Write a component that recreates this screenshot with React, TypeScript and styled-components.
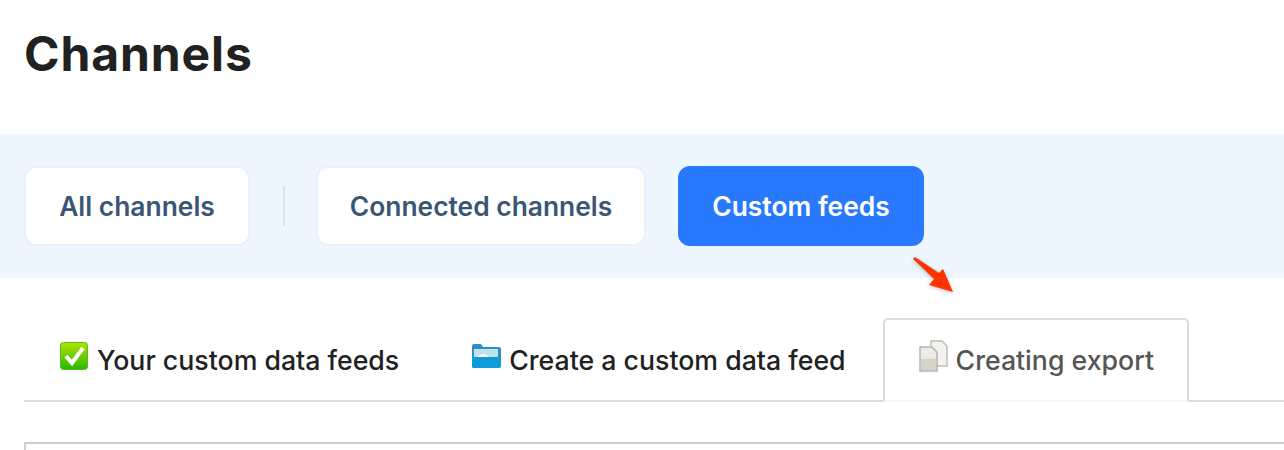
import React from "react"
import styled, { createGlobalStyle } from "styled-components"

const GlobalStyle = createGlobalStyle`
  html, body {
    margin: 0;
    padding: 0;
    background: #fff;
    overflow: hidden;
  }
`

const Page = styled.div`
  position: relative;
  width: 1284px;
  height: 450px;
  overflow: hidden;
  font-family: Inter, "Noto Sans", sans-serif;
`

const Title = styled.h1`
  margin: 0;
  height: 134px;
  padding: 24px 0 0 24px;
  box-sizing: border-box;
  font-size: 48px;
  line-height: 60px;
  font-weight: 700;
  letter-spacing: 0.9px;
  color: #212121;
`

const ChannelBar = styled.div`
  height: 144px;
  box-sizing: border-box;
  background: #eef6ff;
  padding: 32px 24px;
  display: flex;
  align-items: flex-start;
`

const ChannelButton = styled.div<{ $active?: boolean; $width: number }>`
  width: ${({ $width }) => $width}px;
  height: 80px;
  box-sizing: border-box;
  display: flex;
  align-items: center;
  justify-content: center;
  border-radius: 12px;
  font-size: 26.4px;
  font-weight: 600;
  white-space: nowrap;
  background: ${({ $active }) => ($active ? "#2979ff" : "#fff")};
  color: ${({ $active }) => ($active ? "#fff" : "#3a5675")};
  border: 2px solid ${({ $active }) => ($active ? "#2979ff" : "#e9f2fc")};
`

const Divider = styled.div`
  width: 2px;
  height: 40px;
  margin: 20px 31px 0 33px;
  background: #d5e3f0;
`

const Gap = styled.div`
  width: 32px;
`

const TabRow = styled.div`
  margin: 40px 0 0 24px;
  height: 84px;
  box-sizing: border-box;
  border-bottom: 2px solid #dcdcdc;
  display: flex;
  align-items: flex-end;
  gap: 2px;
`

const Tab = styled.div<{ $active?: boolean }>`
  height: ${({ $active }) => ($active ? "84px" : "82px")};
  box-sizing: border-box;
  padding: ${({ $active }) => ($active ? "0 33px" : "2px 35px 0")};
  display: flex;
  align-items: center;
  gap: 8px;
  font-size: 26.7px;
  font-weight: 450;
  white-space: nowrap;
  color: ${({ $active }) => ($active ? "#555" : "#212121")};
  background: #fff;
  border: ${({ $active }) => ($active ? "2px solid #dcdcdc" : "none")};
  border-bottom: ${({ $active }) => ($active ? "2px solid #f7f7f7" : "none")};
  border-radius: 5px 5px 0 0;
  margin-bottom: ${({ $active }) => ($active ? "-2px" : "0")};
`

const TabIcon = styled.svg`
  flex: none;
  margin-top: -8px;
`

const TableEdge = styled.div`
  margin: 40px 0 0 24px;
  height: 8px;
  border: 2px solid #d0d0d0;
  border-right: none;
  border-bottom: none;
`

const Arrow = styled.svg`
  position: absolute;
  left: 908px;
  top: 254px;
  filter: drop-shadow(0 1px 2px rgba(0, 0, 0, 0.25));
`

const Check = () => (
  <TabIcon width="30" height="30" viewBox="0 0 30 30">
    <defs>
      <linearGradient id="checkFill" x1="0" y1="0" x2="0" y2="1">
        <stop offset="0" stopColor="#b8e000" />
        <stop offset="1" stopColor="#28b800" />
      </linearGradient>
    </defs>
    <rect x="1.5" y="1.5" width="27" height="27" rx="3" fill="url(#checkFill)" stroke="#4cc02a" />
    <path d="M7 15l6 7L24 7" fill="none" stroke="#fff" strokeWidth="4" />
  </TabIcon>
)

const Folder = () => (
  <TabIcon width="30" height="26" viewBox="0 0 30 26">
    <path d="M1 3q0-2 2-2h7l2 3h16q2 0 2 2v17q0 2-2 2H3q-2 0-2-2Z" fill="#2d8fc4" />
    <rect x="3" y="6" width="24" height="8" fill="#bfe3ec" />
    <path d="M7 14q5-6 11 0Z" fill="#fff" />
    <path d="M1 14h28v9q0 2-2 2H3q-2 0-2-2Z" fill="#0f9ad8" />
  </TabIcon>
)

const Docs = () => (
  <TabIcon width="30" height="32" viewBox="0 0 30 32">
    <path d="M13 1h11l5 5v20H13Z" fill="#f2f2f0" stroke="#bdbdb9" strokeWidth="1.5" />
    <path d="M2 7h12l5 5v19H2Z" fill="#ecebe7" stroke="#b4b4af" strokeWidth="1.5" />
    <rect x="3" y="19" width="15" height="11" fill="#d6d2c6" />
  </TabIcon>
)

export default function App() {
  return (
    <Page>
      <GlobalStyle />
      <Title>Channels</Title>
      <ChannelBar>
        <ChannelButton $width={226}>All channels</ChannelButton>
        <Divider />
        <ChannelButton $width={330}>Connected channels</ChannelButton>
        <Gap />
        <ChannelButton $active $width={246}>Custom feeds</ChannelButton>
      </ChannelBar>
      <Arrow width="50" height="44" viewBox="0 0 50 44">
        <path d="M5 5L7 3L31 19L35 15L45 38L21 31L26 25Z" fill="#ff3300" />
      </Arrow>
      <TabRow>
        <Tab><Check />Your custom data feeds</Tab>
        <Tab><Folder />Create a custom data feed</Tab>
        <Tab $active><Docs />Creating export</Tab>
      </TabRow>
      <TableEdge />
    </Page>
  )
}
